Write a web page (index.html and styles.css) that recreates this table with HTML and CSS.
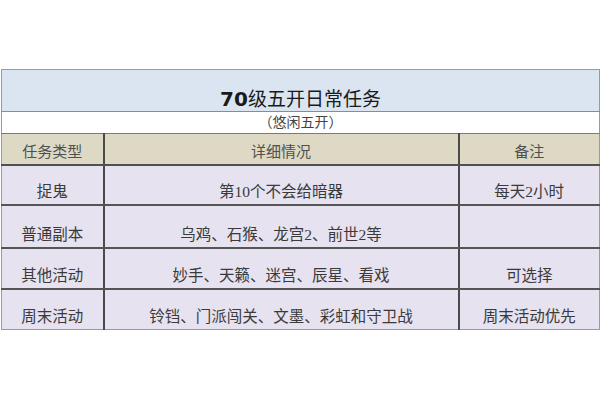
FILE: index.html
```html
<!DOCTYPE html>
<html lang="zh">
<head>
<meta charset="utf-8">
<link rel="stylesheet" href="styles.css">
</head>
<body>
<table class="tasks">
  <colgroup>
    <col class="c1">
    <col class="c2">
    <col class="c3">
  </colgroup>
  <tr class="title-row"><td colspan="3" class="title"><span class="num">70</span>级五开日常任务</td></tr>
  <tr class="sub-row"><td colspan="3" class="subtitle">（悠闲五开）</td></tr>
  <tr class="head-row">
    <th>任务类型</th>
    <th>详细情况</th>
    <th>备注</th>
  </tr>
  <tr class="data r1"><td>捉鬼</td><td>第10个不会给暗器</td><td>每天2小时</td></tr>
  <tr class="data r2"><td>普通副本</td><td>乌鸡、石猴、龙宫2、前世2等</td><td></td></tr>
  <tr class="data r3"><td>其他活动</td><td>妙手、天籁、迷宫、辰星、看戏</td><td>可选择</td></tr>
  <tr class="data r4"><td>周末活动</td><td>铃铛、门派闯关、文墨、彩虹和守卫战</td><td>周末活动优先</td></tr>
</table>
</body>
</html>
```
FILE: styles.css
```css
html, body {
  margin: 0;
  padding: 0;
  background: #ffffff;
}
body {
  padding: 69px 1px 0 1px;
  font-family: "Liberation Serif", "Noto Sans CJK SC", serif;
  color: #3a3a3a;
}
.tasks {
  width: 598px;
  border-collapse: collapse;
  table-layout: fixed;
  border: 1px solid #9a9a9a;
}
.c1 { width: 102px; }
.c2 { width: 355px; }
.c3 { width: 141px; }
.tasks td, .tasks th {
  padding: 0;
  text-align: center;
  vertical-align: bottom;
  font-weight: normal;
  white-space: nowrap;
}
.title {
  height: 41px;
  background: #dbe5f1;
  font-family: "Noto Sans CJK SC", sans-serif;
  font-weight: 700;
  font-size: 19px;
  color: #1a1a1a;
  padding-bottom: 3px;
  line-height: 24px;
  border-bottom: 1px solid #8c8c8c;
}
.title .num {
  font-family: "DejaVu Sans", sans-serif;
  font-weight: 700;
  font-size: 20px;
}
.subtitle {
  height: 21px;
  background: #ffffff;
  font-size: 14px;
  line-height: 20px;
  color: #444;
  border-bottom: 1px solid #7a7a7a;
}
.head-row th {
  height: 29px;
  background: #ddd9c4;
  font-size: 15px;
  line-height: 22px;
  color: #505050;
  border-bottom: 2px solid #505050;
  padding-bottom: 1px;
}
.head-row th + th,
.data td + td {
  border-left: 2px solid #4a4a4a;
}
.data td {
  background: #e6e2ef;
  font-size: 15.5px;
  line-height: 22px;
  padding-bottom: 1px;
  color: #3a3a3a;
  border-bottom: 2px solid #555;
}
.data.r4 td { border-bottom: 1px solid #9a9a9a; }
.r1 td { height: 37px; }
.r2 td { height: 40px; }
.r3 td { height: 38px; }
.r4 td { height: 38px; }
```
